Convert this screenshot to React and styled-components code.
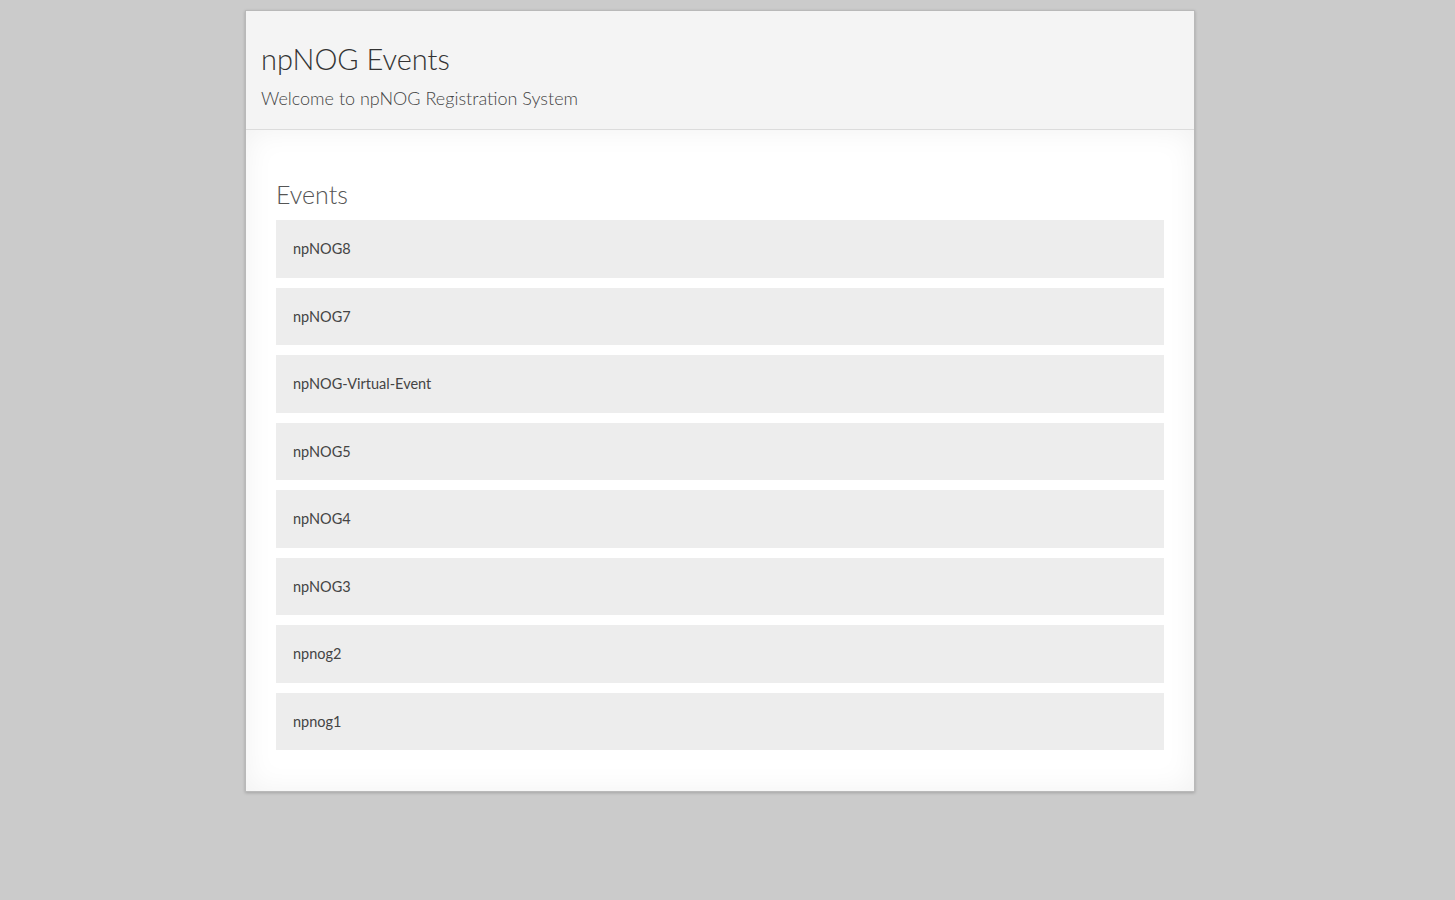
import React from 'react';
import styled, { createGlobalStyle } from 'styled-components';

const GlobalStyle = createGlobalStyle`
  html, body {
    margin: 0;
    padding: 0;
    background: #cbcbcb;
    font-family: Lato, "Open Sans", "Liberation Sans", sans-serif;
    color: #333;
  }
`;

const Page = styled.div`
  padding: 10px 0 40px;
`;

const Container = styled.div`
  width: 948px;
  margin: 0 0 0 245px;
  border: 1px solid #b9b9b9;
  box-shadow: 0 1px 3px rgba(0, 0, 0, 0.2);
  background: #fff;
`;

const Header = styled.header`
  background: #f4f4f4;
  border-bottom: 1px solid #dcdcdc;
  padding: 28px 15px 18px;
`;

const Title = styled.h1`
  margin: 0;
  font-size: 29px;
  font-weight: 300;
  line-height: 40px;
  color: #333;
`;

const Subtitle = styled.p`
  margin: 6px 0 0;
  font-size: 18px;
  font-weight: 300;
  line-height: 26px;
  color: #444;
`;

const Content = styled.main`
  padding: 46px 30px 41px;
  box-shadow: inset 0 0 30px rgba(0, 0, 0, 0.06);
`;

const SectionTitle = styled.h2`
  margin: 0 0 8px;
  font-size: 25px;
  font-weight: 300;
  line-height: 36px;
  color: #555;
`;

const EventList = styled.ul`
  list-style: none;
  margin: 0;
  padding: 0;
  display: flex;
  flex-direction: column;
  gap: 10px;
`;

const EventItem = styled.li`
  background: #ededed;
  height: 57.5px;
  display: flex;
  align-items: center;
  padding: 0 17px;
  font-size: 14.5px;
  color: #444;
`;

const events = [
  'npNOG8',
  'npNOG7',
  'npNOG-Virtual-Event',
  'npNOG5',
  'npNOG4',
  'npNOG3',
  'npnog2',
  'npnog1',
];

const App = () => {
  return (
    <Page>
      <GlobalStyle />
      <Container>
        <Header>
          <Title>npNOG Events</Title>
          <Subtitle>Welcome to npNOG Registration System</Subtitle>
        </Header>
        <Content>
          <SectionTitle>Events</SectionTitle>
          <EventList>
            {events.map((name) => (
              <EventItem key={name}>{name}</EventItem>
            ))}
          </EventList>
        </Content>
      </Container>
    </Page>
  );
};

export default App;
